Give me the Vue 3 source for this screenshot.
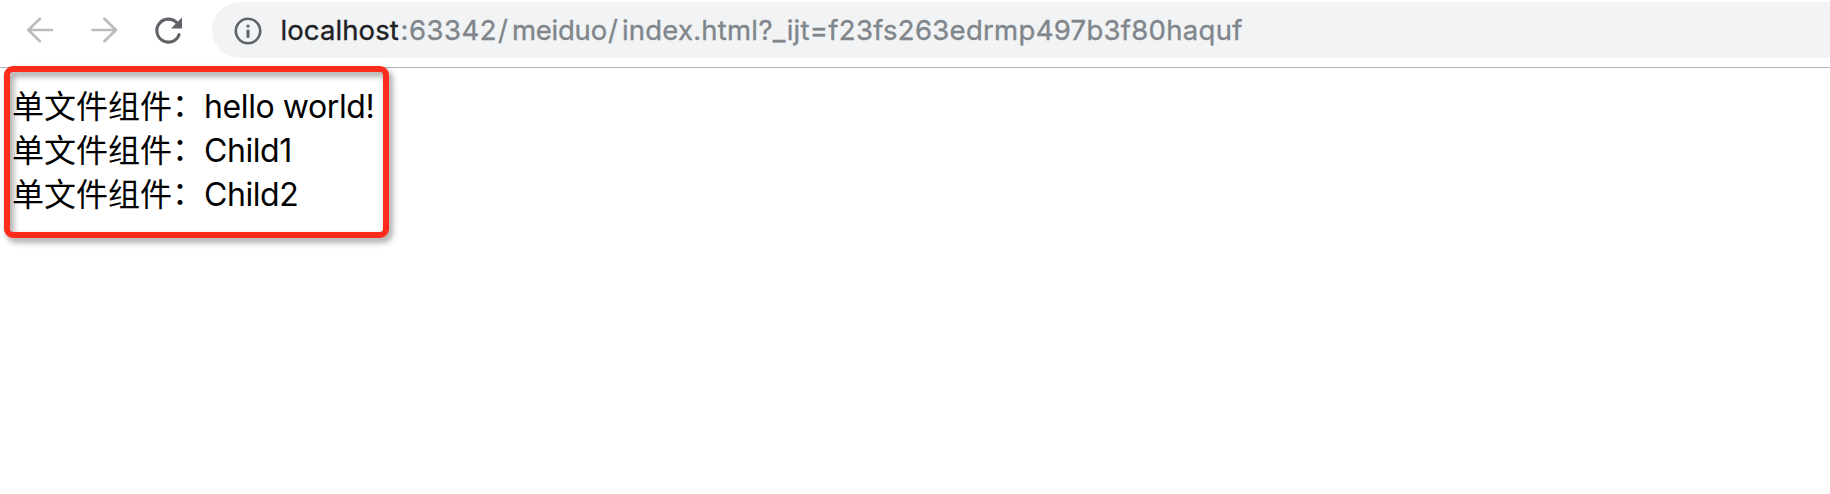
<script setup>
const prefix = '单文件组件'
const items = [
  { text: 'hello world!', kind: 'hello' },
  { text: 'Child1', kind: 'child' },
  { text: 'Child2', kind: 'child' },
]
</script>

<template>
  <div class="browser">
    <header class="toolbar">
      <nav class="controls">
        <svg class="icon" viewBox="0 0 32 32" fill="none" stroke="#babcbe" stroke-width="2.7" stroke-linecap="round" stroke-linejoin="round">
          <path d="M28 16H4.5M15.9 4.7L4.3 16l11.6 11.3" />
        </svg>
        <svg class="icon" viewBox="0 0 32 32" fill="none" stroke="#babcbe" stroke-width="2.7" stroke-linecap="round" stroke-linejoin="round">
          <path d="M4.5 16h23.5M16.4 4.7l11.6 11.3-11.6 11.3" />
        </svg>
        <svg class="icon" viewBox="0 0 32 32">
          <path d="M27.1 20.7A11.5 11.5 0 1 1 24.8 8.8" fill="none" stroke="#5f6368" stroke-width="3.1" stroke-linecap="round" />
          <path d="M30 3.5v11H19z" fill="#5f6368" />
        </svg>
      </nav>
      <div class="omnibox">
        <svg class="info" viewBox="0 0 28 28">
          <circle cx="14" cy="14" r="12.2" fill="none" stroke="#5f6368" stroke-width="2.6" />
          <path d="M12.5 7.8h3v2.8h-3zM12.5 12.7h3v8h-3z" fill="#5f6368" />
        </svg>
        <div class="url"><span class="host">localhost</span><span class="port">:63342</span><span class="slash">/</span><span class="path">meiduo</span><span class="slash">/</span><span class="file">index.html</span><span class="query">?_ijt=f23fs263edrmp497b3f80haquf</span></div>
      </div>
    </header>
    <main class="page">
      <div v-for="item in items" :key="item.text" class="row">
        <span class="prefix">{{ prefix }}</span><span class="colon">：</span><span :class="item.kind">{{ item.text }}</span>
      </div>
    </main>
    <div class="marker"></div>
  </div>
</template>

<style>
body { background: #fff; }
</style>

<style scoped>
.browser {
  position: relative;
  width: 1830px;
  height: 494px;
  overflow: hidden;
  background: #fff;
  font-family: Inter, "Noto Sans CJK SC", sans-serif;
}
.toolbar {
  display: flex;
  box-sizing: border-box;
  height: 68px;
  padding-top: 2px;
  border-bottom: 1px solid #b2b3b5;
}
.controls {
  display: flex;
  gap: 32px;
  box-sizing: border-box;
  width: 212px;
  padding: 11.5px 0 0 24px;
}
.icon { display: block; width: 32px; height: 32px; flex: none; }
.omnibox {
  display: flex;
  flex: 1;
  height: 56px;
  border-radius: 28px 0 0 28px;
  background: #f1f3f4;
}
.info { width: 28px; height: 28px; margin: 14.5px 18.5px 0 22px; flex: none; }
.url {
  display: flex;
  white-space: pre;
  font-size: 27.5px;
  line-height: 56px;
  color: #80868b;
  -webkit-text-stroke: 0.35px currentColor;
}
.url > span { flex: none; }
.host { width: 120px; color: #202124; letter-spacing: 0.1px; }
.port { width: 97.5px; letter-spacing: 0.5px; }
.slash { width: 14px; }
.path { width: 96px; letter-spacing: -0.25px; }
.file { width: 136.5px; letter-spacing: 0.2px; }
.query { letter-spacing: 0.3px; }
.page { padding: 17px 0 0 12px; color: #000; }
.row {
  display: flex;
  height: 44px;
  font-size: 32px;
  line-height: 44px;
  white-space: pre;
}
.prefix { width: 160px; margin-top: -3px; font-family: "Noto Sans CJK SC", sans-serif; }
.colon { width: 32px; margin-top: -5px; font-family: "Noto Sans CJK SC", sans-serif; }
.hello { letter-spacing: -0.4px; }
.child { letter-spacing: -0.45px; }
.marker {
  position: absolute;
  left: 4px;
  top: 66px;
  width: 385px;
  height: 172px;
  box-sizing: border-box;
  border: 6px solid #ff2b1c;
  border-radius: 9px;
  filter: drop-shadow(3px 4px 3px rgba(0, 0, 0, 0.4));
}
</style>
